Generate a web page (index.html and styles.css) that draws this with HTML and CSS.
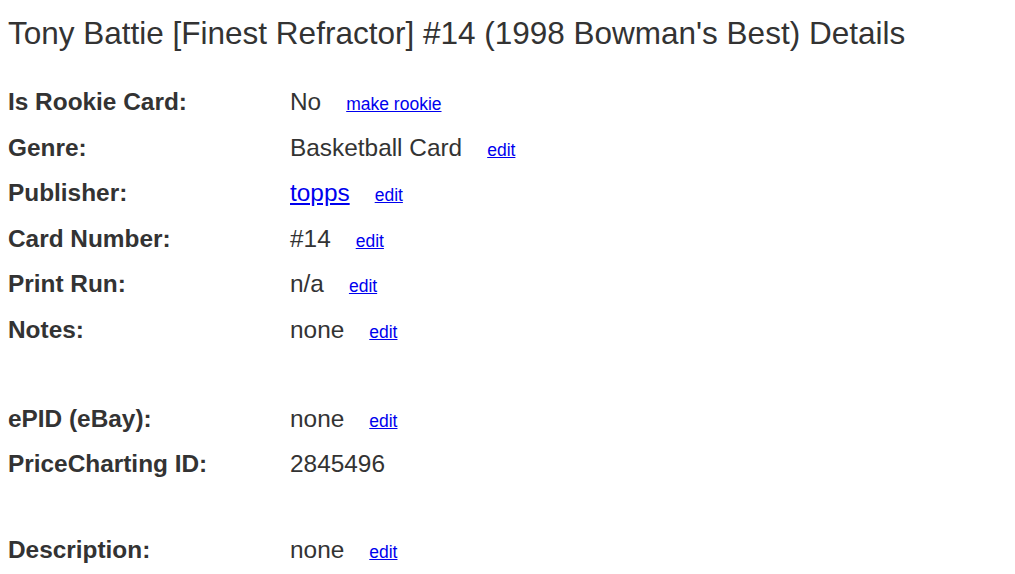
FILE: index.html
```html
<!DOCTYPE html>
<html lang="en">
<head>
<meta charset="utf-8">
<title>Tony Battie Details</title>
<link rel="stylesheet" href="styles.css">
</head>
<body>
<main class="page">
  <h1 class="title">Tony Battie [Finest Refractor] #14 (1998 Bowman's Best) Details</h1>
  <div class="details">
    <div class="row"><div class="label">Is Rookie Card:</div><div class="value">No<a class="action" href="#">make rookie</a></div></div>
    <div class="row"><div class="label">Genre:</div><div class="value">Basketball Card<a class="action" href="#">edit</a></div></div>
    <div class="row"><div class="label">Publisher:</div><div class="value"><a class="value-link" href="#">topps</a><a class="action" href="#">edit</a></div></div>
    <div class="row"><div class="label">Card Number:</div><div class="value">#14<a class="action" href="#">edit</a></div></div>
    <div class="row"><div class="label">Print Run:</div><div class="value">n/a<a class="action" href="#">edit</a></div></div>
    <div class="row"><div class="label">Notes:</div><div class="value">none<a class="action" href="#">edit</a></div></div>
    <div class="spacer spacer-a"></div>
    <div class="row"><div class="label">ePID (eBay):</div><div class="value">none<a class="action" href="#">edit</a></div></div>
    <div class="row"><div class="label">PriceCharting ID:</div><div class="value">2845496</div></div>
    <div class="spacer spacer-b"></div>
    <div class="row"><div class="label">Description:</div><div class="value">none<a class="action" href="#">edit</a></div></div>
  </div>
</main>
</body>
</html>
```

FILE: styles.css
```css
html, body {
  margin: 0;
  padding: 0;
  background: #ffffff;
}

body {
  font-family: "Liberation Sans", Arial, sans-serif;
  color: #333333;
}

.page {
  padding: 8px;
}

.title {
  margin: 7px 0 0 0;
  font-size: 31.5px;
  line-height: 36px;
  font-weight: normal;
  color: #333333;
  white-space: nowrap;
}

.details {
  display: flex;
  flex-direction: column;
  margin-top: 28px;
}

.row {
  display: flex;
  align-items: baseline;
  height: 45.5px;
  line-height: 45.5px;
  font-size: 24.4px;
}

.label {
  width: 282px;
  flex: none;
  font-weight: bold;
}

.value {
  display: flex;
  align-items: baseline;
}

.value-link {
  color: #0000ee;
  text-decoration: underline;
}

.action {
  margin-left: 25px;
  font-size: 17.5px;
  color: #0000ee;
  text-decoration: underline;
}

.spacer-a {
  height: 43.5px;
}

.spacer-b {
  height: 40px;
}
```
